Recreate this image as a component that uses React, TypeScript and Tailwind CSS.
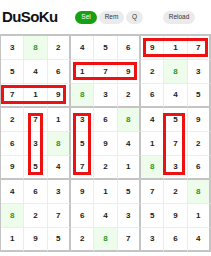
import React from "react";

const grid = [
  [3, 8, 2, 4, 5, 6, 9, 1, 7],
  [5, 4, 6, 1, 7, 9, 2, 8, 3],
  [7, 1, 9, 8, 3, 2, 6, 4, 5],
  [2, 7, 1, 3, 6, 8, 4, 5, 9],
  [6, 3, 8, 5, 9, 4, 1, 7, 2],
  [9, 5, 4, 7, 2, 1, 8, 3, 6],
  [4, 6, 3, 9, 1, 5, 7, 2, 8],
  [8, 2, 7, 6, 4, 3, 5, 9, 1],
  [1, 9, 5, 2, 8, 7, 3, 6, 4],
];

const boxes = [
  { l: 143, t: 4, w: 65, h: 19 },
  { l: 73, t: 28, w: 64, h: 18 },
  { l: 1, t: 51, w: 65, h: 19 },
  { l: 28, t: 79, w: 15, h: 62 },
  { l: 73, t: 79, w: 18, h: 62 },
  { l: 163, t: 79, w: 22, h: 62 },
];

function Cell({ v, r, c }: { v: number; r: number; c: number }) {
  const right =
    c === 8
      ? "border-r-2 border-r-[#c4c4c4]"
      : c % 3 === 2
      ? "border-r-2 border-r-[#c4c4c4]"
      : "border-r border-r-[#ececec]";
  const bottom =
    r % 3 === 2
      ? "border-b-2 border-b-[#c4c4c4]"
      : "border-b border-b-[#ececec]";
  const hl = v === 8;
  return (
    <div
      className={`h-[24px] flex items-center justify-center text-[8px] font-bold ${right} ${bottom} ${
        hl ? "bg-[#eefcec] text-[#1f9a1f]" : "bg-white text-[#222]"
      }`}
    >
      {v}
    </div>
  );
}

export default function App() {
  return (
    <div
      className="w-[211px] h-[256px] bg-white overflow-hidden"
      style={{ fontFamily: '"Liberation Sans", Arial, sans-serif' }}
    >
      <div className="h-[34px] flex items-center">
        <div className="ml-[2px] text-[15px] font-bold tracking-[-0.6px] text-[#111] w-[72px]">
          DuSoKu
        </div>
        <div className="flex items-center gap-[2px] ml-[1px]">
          <button className="h-[13px] w-[22px] rounded-full bg-[#16a016] text-white text-[6.5px] flex items-center justify-center">
            Sel
          </button>
          <button className="h-[13px] w-[25px] rounded-full bg-[#ebebeb] text-[#333] text-[6.5px] flex items-center justify-center">
            Rem
          </button>
          <button className="h-[13px] w-[17px] rounded-full bg-[#ebebeb] text-[#333] text-[6.5px] flex items-center justify-center">
            Q
          </button>
        </div>
        <button className="ml-[20px] h-[13px] w-[32px] rounded-full bg-[#ebebeb] text-[#333] text-[6.5px] flex items-center justify-center">
          Reload
        </button>
      </div>
      <div className="relative w-[211px]">
        <div className="grid grid-cols-9 border-l border-t-2 border-l-[#c4c4c4] border-t-[#c4c4c4]">
          {grid.map((row, r) =>
            row.map((v, c) => <Cell key={`${r}-${c}`} v={v} r={r} c={c} />)
          )}
        </div>
        {boxes.map((b, i) => (
          <div
            key={i}
            className="absolute border-[3px] border-[#ee1111]"
            style={{ left: b.l, top: b.t, width: b.w, height: b.h }}
          />
        ))}
      </div>
    </div>
  );
}
